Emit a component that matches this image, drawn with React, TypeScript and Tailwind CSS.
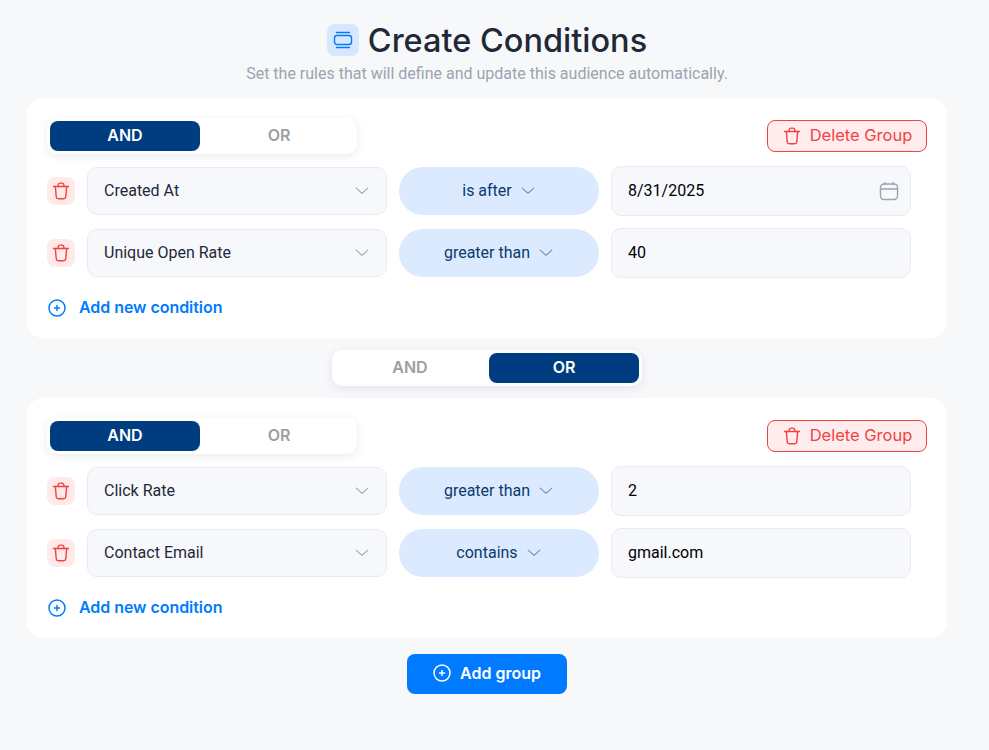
import React from "react";

const Trash = ({ className }: { className?: string }) => (
  <svg className={className} viewBox="0 0 24 24" fill="none" stroke="currentColor" strokeWidth="1.7" strokeLinecap="round" strokeLinejoin="round">
    <path d="M3 6.5h18" />
    <path d="M8.5 6.5V5a2.5 2.5 0 0 1 2.5-2.5h2A2.5 2.5 0 0 1 15.5 5v1.5" />
    <path d="M5.2 6.5l1.1 12.6a2.5 2.5 0 0 0 2.5 2.2h6.4a2.5 2.5 0 0 0 2.5-2.2l1.1-12.6" />
  </svg>
);

const Chevron = ({ className }: { className?: string }) => (
  <svg className={className} viewBox="0 0 12 12" fill="none" stroke="currentColor" strokeWidth="1" strokeLinecap="round" strokeLinejoin="round">
    <path d="M1 3.5l5 4.5 5-4.5" />
  </svg>
);

const PlusCircle = ({ className }: { className?: string }) => (
  <svg className={className} viewBox="0 0 18 18" fill="none" stroke="currentColor" strokeWidth="1.5" strokeLinecap="round">
    <circle cx="9" cy="9" r="8" />
    <path d="M9 6.5v5M6.5 9h5" />
  </svg>
);

const Calendar = () => (
  <svg className="w-[20px] h-[20px] text-[#9ca3af]" viewBox="0 0 20 20" fill="none" stroke="currentColor" strokeWidth="1.4" strokeLinecap="round">
    <rect x="1.5" y="3" width="17" height="15.5" rx="3.5" />
    <path d="M1.5 8h17M6 1.5v2M14 1.5v2" />
  </svg>
);

const display = "font-['Inter','Liberation_Sans',sans-serif]";

const Toggle = ({ active }: { active: "AND" | "OR" }) => (
  <div className="flex gap-1 w-[310px] h-[36px] p-[3px] bg-white rounded-[10px] shadow-[0_2px_8px_rgba(30,50,90,0.1)]">
    {(["AND", "OR"] as const).map((label) => (
      <div
        key={label}
        className={`${display} w-[150px] flex items-center justify-center pb-[2px] rounded-lg text-[16px] font-semibold ${
          active === label ? "bg-[#003d80] text-white" : "text-[#9b9ea3]"
        }`}
      >
        {label}
      </div>
    ))}
  </div>
);

const Row = ({ field, op, value, date }: { field: string; op: string; value: string; date?: boolean }) => (
  <div className="flex items-center gap-3">
    <button className="w-[28px] h-[28px] rounded-lg bg-[#ffe9e9] flex items-center justify-center text-[#ef4444]">
      <Trash className="w-[20px] h-[20px]" />
    </button>
    <div className="w-[300px] h-[48px] flex items-center justify-between pl-4 pr-[17px] rounded-[10px] bg-[#f7f8fc] border border-[#e8ebf2] text-[#1f2937] text-[16px]">
      <span>{field}</span>
      <Chevron className="w-[14px] h-[14px] text-[#a3a8b0]" />
    </div>
    <div className="w-[200px] h-[48px] pr-px flex items-center justify-center gap-[9px] rounded-full bg-[#dbeafe] text-[#0b3a6f] text-[16px]">
      <span>{op}</span>
      <Chevron className="w-[14px] h-[14px] text-[#6f93b8]" />
    </div>
    <div className="w-[300px] h-[50px] flex items-center justify-between pl-4 pr-[11px] rounded-[10px] bg-[#f7f8fc] border border-[#e8ebf2] text-black text-[16px]">
      <span>{value}</span>
      {date && <Calendar />}
    </div>
  </div>
);

const Group = ({ rows }: { rows: { field: string; op: string; value: string; date?: boolean }[] }) => (
  <section className="w-[920px] h-[240px] bg-white rounded-2xl pt-5 px-5">
    <div className="flex items-center justify-between h-[36px]">
      <Toggle active="AND" />
      <button className={`${display} w-[160px] h-[32px] flex items-center justify-center gap-2 rounded-lg border border-[#ef4444] bg-[#ffeded] text-[#ef4444] text-[16.5px] font-normal`}>
        <Trash className="w-[20px] h-[20px]" />
        <span className="-mt-[2px]">Delete Group</span>
      </button>
    </div>
    <div className="flex flex-col gap-3 mt-3 w-[864px]">
      {rows.map((r) => (
        <Row key={r.field} {...r} />
      ))}
    </div>
    <div className={`${display} flex items-center gap-[13px] mt-[18px] ml-px text-[#007bff] text-[16px] font-semibold`}>
      <PlusCircle className="w-[18px] h-[18px]" />
      <span className="-mt-px tracking-[-0.05px]">Add new condition</span>
    </div>
  </section>
);

export default function App() {
  return (
    <div className="min-h-[750px] bg-[#f7f8fa] font-['Roboto',sans-serif]">
      <div className="w-[974px] flex flex-col items-center pt-6">
        <div className="flex items-center gap-[9px] h-[32px]">
          <div className="w-[32px] h-[32px] rounded-lg bg-[#d6e7ff] flex items-center justify-center text-[#007bff]">
            <svg className="w-[20px] h-[20px]" viewBox="0 0 20 20" fill="none" stroke="currentColor" strokeWidth="1.4" strokeLinecap="round">
              <path d="M3.5 2.5h13M3.5 17.5h13" />
              <rect x="1.5" y="5.5" width="17" height="9" rx="2.5" />
            </svg>
          </div>
          <h1 className={`${display} mt-[2px] text-[32.5px] font-medium leading-none text-[#1f2937]`}>Create Conditions</h1>
        </div>
        <p className="mt-[9px] text-[16px] leading-[18px] text-[#9ca3af]">
          Set the rules that will define and update this audience automatically.
        </p>
        <div className="mt-[15px] flex flex-col items-center">
          <Group
            rows={[
              { field: "Created At", op: "is after", value: "8/31/2025", date: true },
              { field: "Unique Open Rate", op: "greater than", value: "40" },
            ]}
          />
          <div className="my-3">
            <Toggle active="OR" />
          </div>
          <Group
            rows={[
              { field: "Click Rate", op: "greater than", value: "2" },
              { field: "Contact Email", op: "contains", value: "gmail.com" },
            ]}
          />
          <button className={`${display} mt-4 w-[160px] h-[40px] pb-[2px] flex items-center justify-center gap-[9px] rounded-lg bg-[#007bff] text-white text-[16px] font-semibold`}>
            <PlusCircle className="w-[18px] h-[18px]" />
            Add group
          </button>
        </div>
      </div>
    </div>
  );
}
